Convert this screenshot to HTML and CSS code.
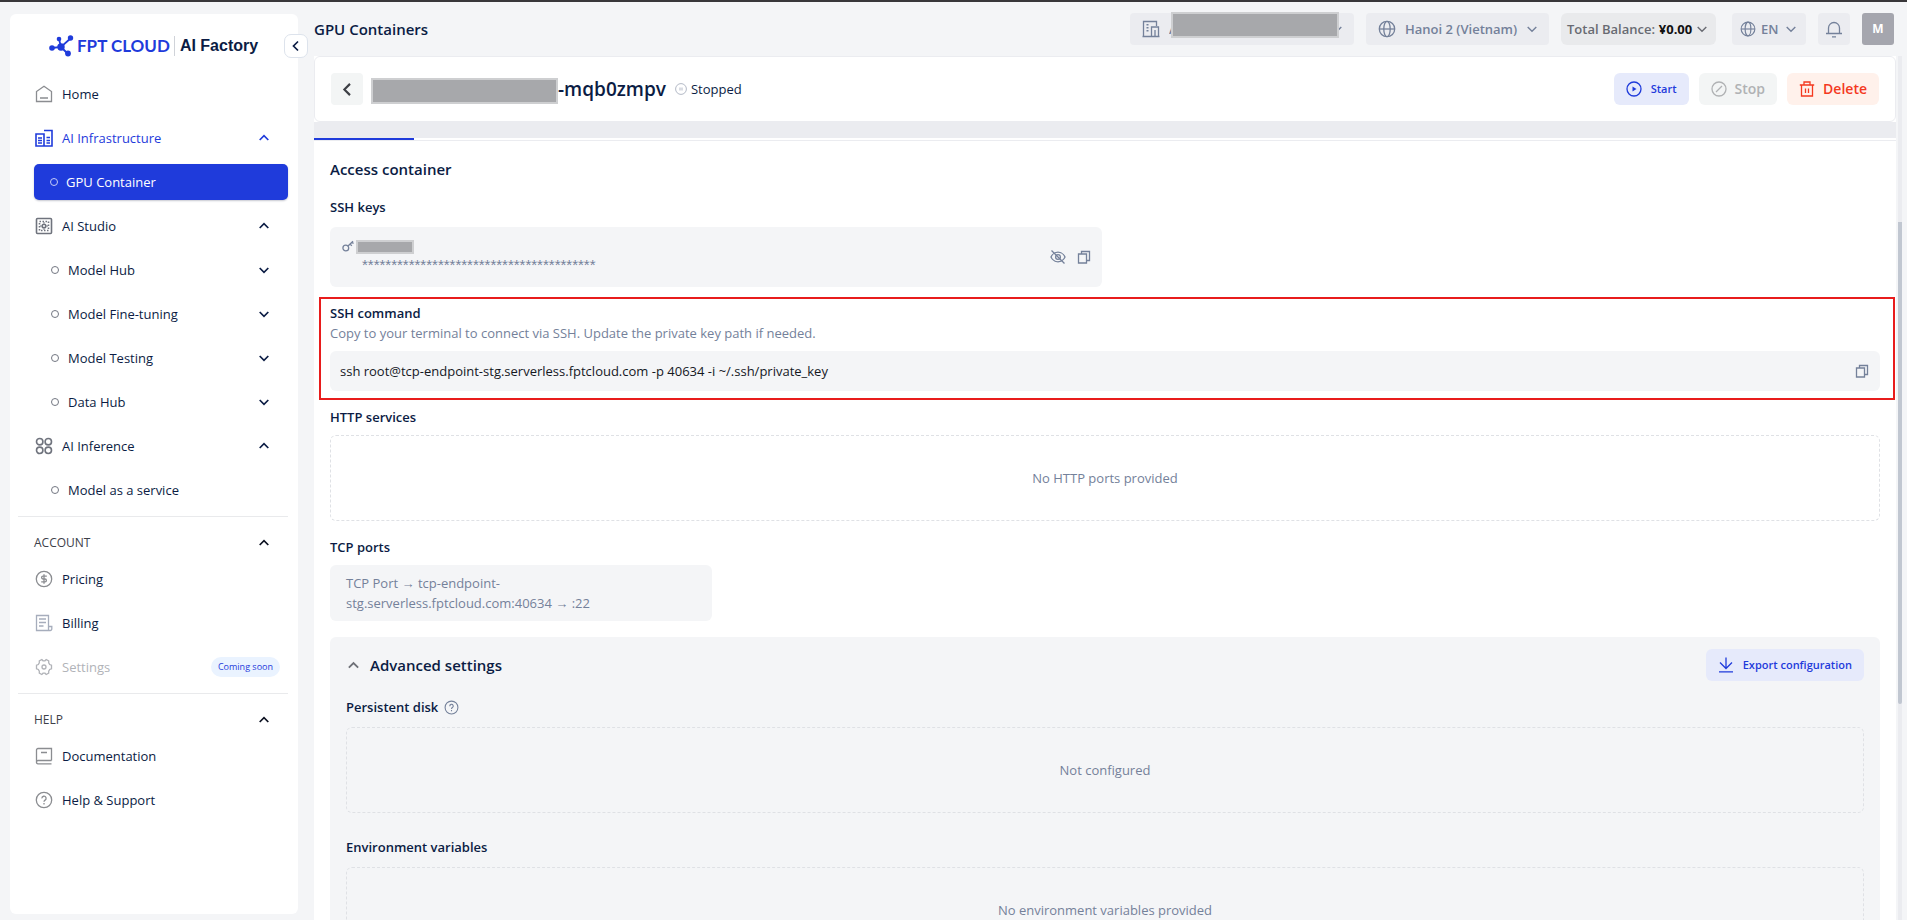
FILE: index.html
```html
<!DOCTYPE html>
<html lang="en">
<head>
<meta charset="utf-8">
<meta name="viewport" content="width=device-width, initial-scale=1">
<title>GPU Containers</title>
<link rel="stylesheet" href="styles.css">
</head>
<body>
<svg class="sprite" aria-hidden="true">
  <symbol id="up" viewBox="0 0 12 12"><path d="M1.700 8 6 3.700 10.300 8"/></symbol>
  <symbol id="down" viewBox="0 0 12 12"><path d="M1.700 4 6 8.300 10.300 4"/></symbol>
  <symbol id="left" viewBox="0 0 12 12"><path d="M8 1.500 3.500 6 8 10.500"/></symbol>
  <symbol id="copy" viewBox="0 0 16 16"><path d="M2.500 5h8v9h-8zM5.500 5V2.500h8v9h-3"/></symbol>
  <symbol id="globe" viewBox="0 0 18 18"><circle cx="9" cy="9" r="7.700"/><ellipse cx="9" cy="9" rx="3.200" ry="7.700"/><path d="M1.300 9h15.400" /></symbol>
  <symbol id="help" viewBox="0 0 18 18"><circle cx="9" cy="9" r="7.700"/><path d="M6.900 7.400a2.100 2.100 0 1 1 3.200 1.700c-.8.500-1.100.8-1.100 1.700M9 12.100v1.300"/></symbol>
</svg>
<div class="app">
  <aside class="sidebar">
    <div class="brand">
      <svg class="brand-mark" viewBox="0 0 25 22"><path d="M3 13 12 12 22 3M12 12 10 4M12 12l7 7" fill="none" stroke="#1f3bdb" stroke-width="1.800"/><g fill="#1f3bdb" stroke="none"><circle cx="3" cy="13" r="2.800"/><circle cx="10" cy="4" r="2.300"/><circle cx="21.500" cy="3" r="2.700"/><circle cx="19" cy="18.500" r="2.900"/><circle cx="12" cy="12" r="3.700"/></g></svg>
      <span class="brand-name">FPT CLOUD</span>
      <span class="brand-product">AI Factory</span>
    </div>
    <button class="collapse" aria-label="Collapse sidebar"><svg class="chev"><use href="#left"/></svg></button>
    <nav class="nav">
      <a class="item" href="#"><svg class="icon" viewBox="0 0 18 18"><path d="M1.500 16.500V6.500L9 1.200l7.500 5.300v10zM5 13h8"/></svg>Home</a>
      <a class="item open" href="#"><svg class="icon heavy" viewBox="0 0 18 18"><path d="M1 5h8v12H1zM9 1.500h8V17H9M3 9h4M3 11.500h4M3 14h4M11.500 8.500H15M11.500 11.500H15M11.500 14H15"/></svg>AI Infrastructure<svg class="chev"><use href="#up"/></svg></a>
      <a class="item active" href="#"><span class="dot"></span>GPU Container</a>
      <a class="item slate" href="#"><svg class="icon heavy" viewBox="0 0 18 18"><rect x="1.500" y="1.500" width="15" height="15" rx="1"/><path d="M4.500 4.500h9v9h-9z" stroke-dasharray="1.500 1.500"/><circle cx="9" cy="9" r="1.800"/><path d="M9 5v1.500M9 11.500V13M5 9h1.500M11.500 9H13" stroke-width="1"/></svg>AI Studio<svg class="chev"><use href="#up"/></svg></a>
      <a class="item sub" href="#"><span class="dot"></span>Model Hub<svg class="chev"><use href="#down"/></svg></a>
      <a class="item sub" href="#"><span class="dot"></span>Model Fine-tuning<svg class="chev"><use href="#down"/></svg></a>
      <a class="item sub" href="#"><span class="dot"></span>Model Testing<svg class="chev"><use href="#down"/></svg></a>
      <a class="item sub" href="#"><span class="dot"></span>Data Hub<svg class="chev"><use href="#down"/></svg></a>
      <a class="item slate" href="#"><svg class="icon heavy" viewBox="0 0 18 18"><circle cx="4.700" cy="4.700" r="3.200"/><circle cx="13.300" cy="4.700" r="3.200"/><circle cx="4.700" cy="13.300" r="3.200"/><circle cx="13.300" cy="13.300" r="3.200"/></svg>AI Inference<svg class="chev"><use href="#up"/></svg></a>
      <a class="item sub" href="#"><span class="dot"></span>Model as a service</a>
    </nav>
    <nav class="nav group">
      <button class="group-head">ACCOUNT<svg class="chev"><use href="#up"/></svg></button>
      <a class="item" href="#"><svg class="icon" viewBox="0 0 18 18"><circle cx="9" cy="9" r="7.700"/><path d="M11.800 6.200H8a1.400 1.400 0 0 0 0 2.800h2a1.400 1.400 0 0 1 0 2.800H6.200M9 4.300v9.400"/></svg>Pricing</a>
      <a class="item" href="#"><svg class="icon soft" viewBox="0 0 18 18"><path d="M13.500 12V1.500h-12v15h13.800a1.500 1.500 0 0 0 1.500-1.500v-2.500h-3.300v4M4 5h7M4 8.500h7M4 12h4.500"/></svg>Billing</a>
      <a class="item disabled" href="#" aria-disabled="true"><svg class="icon" viewBox="0 0 18 18"><path d="M6.800 1.500 8 2.800h2l1.200-1.300 2.500 1.300v2l1 1.700 1.800.7v3.600l-1.800.7-1 1.700v2l-2.500 1.300L10 15.200H8l-1.200 1.300-2.500-1.300v-2l-1-1.700-1.800-.7V7.200l1.800-.7 1-1.700v-2z"/><circle cx="9" cy="9" r="2"/></svg>Settings<span class="badge">Coming soon</span></a>
    </nav>
    <nav class="nav group">
      <button class="group-head">HELP<svg class="chev"><use href="#up"/></svg></button>
      <a class="item" href="#"><svg class="icon" viewBox="0 0 18 18"><path d="M16.500 13.500v-12H3A1.500 1.500 0 0 0 1.500 3v12A1.500 1.500 0 0 0 3 16.800h13.500M16.500 13.500H3A1.500 1.500 0 0 0 1.500 15M6 5.500h6"/></svg>Documentation</a>
      <a class="item" href="#"><svg class="icon"><use href="#help"/></svg>Help &amp; Support</a>
    </nav>
  </aside>

  <div class="main">
    <header class="topbar">
      <h1 class="page-title">GPU Containers</h1>
      <label class="pill org"><svg class="icon" viewBox="0 0 18 18"><path d="M1.500 16.500v-15h13V6M.5 16.500h17M9.500 16.500V7h7v9.500M13 10v6.500"/><path d="M5.500 4v9" stroke-width="2" stroke-dasharray="1.500 1.500"/></svg>
        <select aria-label="Organization"><option>A</option></select><svg class="chev"><use href="#down"/></svg><span class="mask org-mask"></span></label>
      <label class="pill region"><svg class="icon"><use href="#globe"/></svg>
        <select aria-label="Region"><option>Hanoi 2 (Vietnam)</option></select><svg class="chev"><use href="#down"/></svg></label>
      <button class="pill balance">Total Balance: <b>¥0.00</b><svg class="chev"><use href="#down"/></svg></button>
      <label class="pill lang"><svg class="icon"><use href="#globe"/></svg>
        <select aria-label="Language"><option>EN</option></select><svg class="chev"><use href="#down"/></svg></label>
      <button class="pill square" aria-label="Notifications"><svg class="icon" viewBox="0 0 18 18"><path d="M3.500 13.500V8a5.500 5.500 0 0 1 11 0v5.500M1 13.500h16M7 16.800h4"/></svg></button>
      <button class="avatar">M</button>
    </header>

    <div class="scroller">
      <main class="page">
        <div class="detail-head">
          <button class="back" aria-label="Back"><svg class="chev"><use href="#left"/></svg></button>
          <div class="name"><span class="mask name-mask"></span><h2>-mqb0zmpv</h2></div>
          <span class="status"><svg viewBox="0 0 12 12"><circle cx="6" cy="6" r="5.400"/><path d="M5 4.500v3M7 4.500v3"/></svg>Stopped</span>
          <div class="actions">
            <button class="btn primary small"><svg viewBox="0 0 16 16"><circle cx="8" cy="8" r="7"/><path d="M6.500 5.500v5l4-2.500z" fill="currentColor" stroke="none"/></svg>Start</button>
            <button class="btn muted" disabled><svg viewBox="0 0 16 16"><circle cx="8" cy="8" r="7"/><path d="m5 11 6-6"/></svg>Stop</button>
            <button class="btn danger"><svg viewBox="0 0 16 16"><path d="M.8 4h14.400M5 4V1h6v3M2.500 4v11h11V4M6.500 7.500v4.500M9.500 7.500v4.500"/></svg>Delete</button>
          </div>
        </div>
        <div class="tabs"><span class="tab-line"></span></div>

        <div class="content">
          <h3 class="section-title">Access container</h3>
          <section class="block keys">
            <h4>SSH keys</h4>
            <div class="key-card">
              <div class="key-text">
                <div class="key-name"><svg viewBox="0 0 12 12"><circle cx="3.800" cy="8" r="2.900"/><path d="M6 6 11 1.200M8 4l1.800 1.800M10 2l1.500 1.500"/></svg><span class="mask key-mask"></span></div>
                <div class="stars">****************************************</div>
              </div>
              <div class="key-tools">
                <button class="tool" aria-label="Show key"><svg viewBox="0 0 16 16"><path d="M1 8s2-4.800 7-4.800S15 8 15 8s-2 4.800-7 4.800S1 8 1 8z"/><circle cx="8" cy="8" r="2.400"/><path d="m1.500 1.500 13 13"/></svg></button>
                <button class="tool" aria-label="Copy key"><svg><use href="#copy"/></svg></button>
              </div>
            </div>
          </section>
          <section class="block highlighted">
            <h4>SSH command</h4>
            <p class="hint">Copy to your terminal to connect via SSH. Update the private key path if needed.</p>
            <div class="command"><code>ssh root@tcp-endpoint-stg.serverless.fptcloud.com -p 40634 -i ~/.ssh/private_key</code><button class="tool" aria-label="Copy command"><svg><use href="#copy"/></svg></button></div>
          </section>
          <section class="block">
            <h4>HTTP services</h4>
            <div class="empty">No HTTP ports provided</div>
          </section>
          <section class="block">
            <h4>TCP ports</h4>
            <div class="port">TCP Port → tcp-endpoint-<br>stg.serverless.fptcloud.com:40634 → :22</div>
          </section>
          <section class="advanced">
            <div class="advanced-head">
              <button class="toggle"><svg class="chev"><use href="#up"/></svg>Advanced settings</button>
              <button class="btn primary small"><svg viewBox="0 0 16 16"><path d="M8 .5v11M2 5.500l6 6 6-6M1 14.800h14"/></svg>Export configuration</button>
            </div>
            <div class="block inner">
              <h4>Persistent disk <svg class="q"><use href="#help"/></svg></h4>
              <div class="empty">Not configured</div>
            </div>
            <div class="block inner">
              <h4>Environment variables</h4>
              <div class="empty">No environment variables provided</div>
            </div>
          </section>
        </div>
      </main>
      <div class="track"><span class="thumb"></span></div>
    </div>
  </div>
</div>
</body>
</html>
```
FILE: styles.css
```css
* { box-sizing: border-box; }
body, h1, h2, h3, h4, p { margin: 0; }
body {
  color: #0b1c44;
  background: #f4f5f7;
  font: 13px/20px "Segoe UI", "Open Sans", "Noto Sans", sans-serif;
}
button, select {
  margin: 0;
  padding: 0;
  border: 0;
  background: none;
  color: inherit;
  font: inherit;
  cursor: pointer;
}
a { color: inherit; text-decoration: none; }
svg { flex: none; fill: none; stroke: currentColor; stroke-width: 1.3; }
.sprite { position: absolute; width: 0; height: 0; }
.icon { width: 18px; height: 18px; }
.heavy { stroke-width: 1.6; }
.chev { width: 12px; height: 12px; stroke-width: 1.7; }
.mask { flex: none; background: #a7a8ab; border: 2px solid #cecfd1; }

.app {
  display: flex;
  gap: 16px;
  height: 100vh;
  padding-left: 10px;
  border-top: 2px solid #39373a;
  overflow: hidden;
}

/* Sidebar */
.sidebar {
  position: relative;
  flex: none;
  width: 288px;
  margin: 12px 0 6px;
  background: #fff;
  border-radius: 6px;
}
.brand {
  display: flex;
  align-items: center;
  height: 36px;
  margin: 14px 0 12px 39px;
}
.brand-mark { width: 25px; height: 22px; margin-right: 3px; }
.brand-name {
  padding-right: 4px;
  border-right: 1px solid #d0d3d9;
  color: #1f3bdb;
  font: 700 17px/20px Lato, sans-serif;
}
.brand-product {
  padding-left: 5px;
  font: 700 16px/20px "Liberation Sans", Arial, sans-serif;
}
.collapse {
  position: absolute;
  top: 20px;
  right: -10px;
  display: grid;
  place-items: center;
  width: 24px;
  height: 24px;
  background: #fff;
  border: 1px solid #dde3ec;
  border-radius: 7px;
}
.nav {
  display: flex;
  flex-direction: column;
  gap: 8px;
  margin: 0 10px 0 8px;
  padding: 0 0 8px 16px;
}
.item {
  display: flex;
  align-items: center;
  gap: 9px;
  height: 36px;
  padding: 0 18px 0 1px;
  border-radius: 5px;
}
.item .icon { color: #8b8d91; }
.item.slate .icon { color: #6f737d; }
.item .icon.soft { color: #a6adbc; }
.item .chev { margin-left: auto; }
.item.open, .item.open .icon { color: #1f3bdb; }
.item.sub { padding-left: 17px; }
.item.active {
  gap: 8px;
  padding-left: 16px;
  color: #fff;
  background: #1f3bdb;
  box-shadow: 0 1px 2px #c6c8d0;
}
.item.disabled, .item.disabled .icon { color: #b1b3b8; }
.dot {
  flex: none;
  width: 8px;
  height: 8px;
  border: 1px solid #737782;
  border-radius: 50%;
}
.active .dot { border-color: #c6cdf7; }
.badge {
  margin: 0 -10px 0 auto;
  padding: 0 7px;
  color: #1f3bdb;
  background: #eaf3ff;
  border-radius: 10px;
  font-size: 9px;
}
.group { padding-top: 16px; border-top: 1px solid #e9eaec; }
.group-head {
  display: flex;
  align-items: center;
  justify-content: space-between;
  height: 20px;
  padding-right: 18px;
  color: #3d4049;
  font-size: 12px;
}
.group-head .chev { color: #0b1020; }

/* Top bar */
.main {
  display: flex;
  flex: 1;
  flex-direction: column;
  min-width: 0;
}
.topbar {
  display: flex;
  flex: none;
  align-items: center;
  gap: 12px;
  height: 54px;
  padding-right: 13px;
}
.page-title { margin-right: auto; font-size: 15px; font-weight: 600; }
.pill {
  position: relative;
  display: flex;
  align-items: center;
  height: 32px;
  padding: 0 11px 0 12px;
  color: #74819a;
  background: #ebecf0;
  border-radius: 4px;
  font-weight: 600;
}
.pill select { flex: 1; min-width: 0; margin-left: 9px; appearance: none; }
.pill .chev { stroke-width: 1.4; }
.org { width: 224px; }
.org-mask { position: absolute; top: -1px; left: 41px; width: 168px; height: 26px; }
.region { width: 183px; }
.balance {
  justify-content: space-between;
  width: 155px;
  margin-right: 4px;
  padding: 0 8px 0 6px;
  color: #686a72;
  background: #e9eaec;
  border-radius: 6px;
}
.balance b { color: #111; font-weight: 700; }
.lang { width: 74px; padding: 0 9px 0 8px; }
.lang .icon { width: 16px; height: 16px; }
.lang select { margin-left: 5px; }
.square { width: 32px; padding: 0; justify-content: center; }
.avatar {
  width: 32px;
  height: 32px;
  color: #fff;
  background: #a5a6ae;
  border-radius: 3px;
  font-size: 12px;
  font-weight: 700;
}

/* Detail page */
.scroller { display: flex; flex: 1; min-height: 0; padding-right: 5px; }
.page { flex: 1; min-width: 0; background: #fff; overflow: hidden; }
.track { flex: none; width: 4px; margin-left: 2px; padding-top: 166px; background: #ebecf0; }
.thumb { display: block; height: 69%; background: #c1c7d1; border-radius: 0 0 2px 2px; }
.detail-head {
  display: flex;
  align-items: center;
  height: 66px;
  padding: 0 16px;
  border: 1px solid #ebecf0;
  border-radius: 6px;
}
.back {
  display: grid;
  place-items: center;
  width: 32px;
  height: 32px;
  margin-right: 8px;
  color: #3d3f45;
  background: #f3f5f5;
  border-radius: 4px;
}
.back .chev { width: 15px; height: 15px; }
.name { display: flex; align-items: center; }
.name-mask { width: 187px; height: 26px; margin-top: 4px; }
.name h2 { font-size: 19px; font-weight: 600; line-height: 28px; }
.status { display: flex; align-items: center; gap: 4px; margin-left: 9px; }
.status svg { width: 12px; height: 12px; color: #b3b9c6; stroke-width: 1; }
.actions { display: flex; gap: 10px; margin-left: auto; }
.btn {
  display: flex;
  align-items: center;
  gap: 8px;
  height: 32px;
  padding: 0 12px;
  border-radius: 6px;
  font-size: 14px;
  font-weight: 600;
}
.btn svg { width: 16px; height: 16px; }
.small { gap: 9px; font-size: 11px; }
.primary { color: #1f3bdb; background: #e6eafb; }
.muted { color: #b0b2b4; background: #f3f5f5; }
.danger { color: #f4391f; background: #fff1eb; }
.tabs {
  height: 19px;
  background: linear-gradient(#ebecf0 16px, #fff 16px);
  border-bottom: 1px solid #ebecf0;
}
.tab-line { display: block; width: 100px; height: 18px; border-bottom: 2px solid #1f3bdb; }

.content { display: flex; flex-direction: column; gap: 16px; padding: 16px; }
.section-title { font-size: 15px; font-weight: 600; line-height: 24px; }
.block { display: flex; flex-direction: column; gap: 8px; }
.block h4 { display: flex; align-items: center; gap: 6px; font-size: 13px; font-weight: 600; }
.keys, .inner { gap: 10px; }
.key-card {
  display: flex;
  align-items: center;
  max-width: 772px;
  height: 60px;
  padding: 0 10px 0 12px;
  background: #f4f5f7;
  border-radius: 6px;
}
.key-text { flex: 1; color: #74819a; }
.key-name { display: flex; align-items: center; gap: 2px; height: 16px; }
.key-name svg { width: 12px; height: 12px; }
.key-mask { width: 58px; height: 14px; margin-top: 2px; }
.stars { padding-left: 20px; font: 15px/22px "Liberation Sans", Arial, sans-serif; }
.key-tools { display: flex; gap: 10px; }
.tool { display: grid; place-items: center; width: 16px; height: 16px; color: #74819a; }
.tool svg { width: 16px; height: 16px; }

.highlighted { position: relative; }
.highlighted::after {
  content: "";
  position: absolute;
  inset: -6px -15px -9px -11px;
  border: 2px solid #e81c1c;
  pointer-events: none;
}
.hint { margin-top: -8px; color: #74819a; }
.command {
  display: flex;
  align-items: center;
  justify-content: space-between;
  height: 40px;
  padding: 0 10px;
  color: #15181f;
  background: #f4f5f7;
  border-radius: 6px;
}
.command code { font: inherit; }
.empty {
  display: grid;
  place-items: center;
  height: 86px;
  color: #74819a;
  border: 1px dashed #dfe1e5;
  border-radius: 6px;
}
.port {
  max-width: 382px;
  padding: 8px 16px;
  color: #74819a;
  background: #f4f5f7;
  border-radius: 6px;
}
.advanced {
  display: flex;
  flex-direction: column;
  gap: 24px;
  padding: 12px 16px 24px;
  background: #f4f5f7;
  border-radius: 6px;
}
.advanced-head { display: flex; justify-content: space-between; margin-bottom: -8px; }
.toggle { display: flex; align-items: center; gap: 10px; padding-left: 1px; font-size: 15px; font-weight: 600; }
.toggle .chev { width: 13px; height: 13px; color: #6f7178; }
.q { width: 15px; height: 15px; color: #74819a; }
```
